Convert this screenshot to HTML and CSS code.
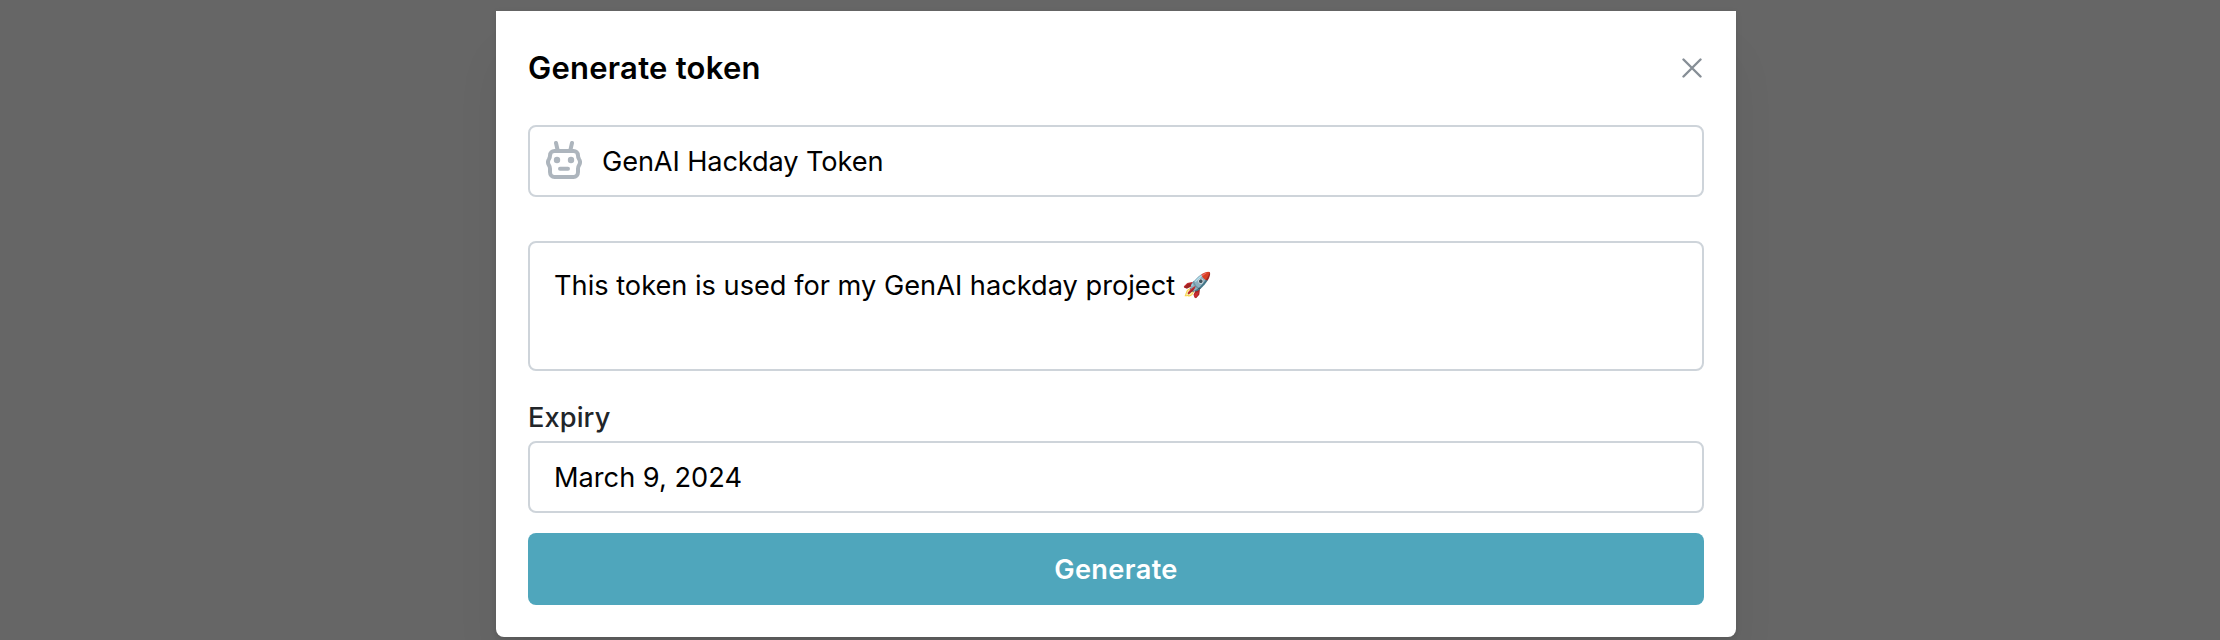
FILE: index.html
```html
<!DOCTYPE html>
<html lang="en">
<head>
<meta charset="utf-8">
<title>Generate token</title>
<link rel="stylesheet" href="styles.css">
</head>
<body>
<main class="overlay">
  <section class="modal" role="dialog" aria-labelledby="title">
    <header class="modal-header">
      <h1 class="title" id="title">Generate token</h1>
      <svg class="close" viewBox="0 0 20 20" role="button" aria-label="Close"><path d="M1.5 1.5l17 17M18.5 1.5l-17 17"/></svg>
    </header>
    <div class="field name-field">
      <svg class="robot" viewBox="0 0 36 38">
        <path class="robot-line" d="M10 2l1.600 7M26 2l-1.600 7M8.500 10h19c2.500 0 4.500 1.900 4.500 4.400 0 1.500.2 2.300 1 3.600 1.300 2 1.300 4.300 0 6.300-.8 1.200-1 2-1 3.400V31c0 3-2 5-4.500 5h-19C6 36 4 34 4 31v-3.300c0-1.400-.2-2.200-1-3.400-1.300-2-1.300-4.300 0-6.300.8-1.300 1-2.100 1-3.600C4 11.900 6 10 8.500 10z"/>
        <path class="robot-line" d="M14 27.700h8"/>
        <circle cx="11" cy="19" r="3.200"/><circle cx="25" cy="19" r="3.200"/>
      </svg>
      <span class="value name-value">GenAI Hackday Token</span>
    </div>
    <div class="field description-field"><span class="value">This token is used for my GenAI hackday project</span><span class="emoji">🚀</span></div>
    <div class="label">Expiry</div>
    <div class="field date-field"><span class="value date-value">March 9, 2024</span></div>
    <button class="submit"><span>Generate</span></button>
  </section>
</main>
</body>
</html>
```
FILE: styles.css
```css
* { box-sizing: border-box; }
body { margin: 0; font-family: Inter, "Liberation Sans", sans-serif; color: #000; }
.overlay { height: 640px; overflow: hidden; display: flex; justify-content: center; padding-top: 11px; background: #666; }
.modal { width: 1240px; height: 626px; margin-left: 12px; padding: 32px; display: flex; flex-direction: column; background: #fff; border-radius: 0 0 8px 8px; box-shadow: 0 2px 6px rgba(0,0,0,.1), 0 40px 50px -10px rgba(0,0,0,.08); }
.modal-header { height: 50px; margin-bottom: 32px; display: flex; align-items: center; justify-content: space-between; }
.title { margin: 0; font-size: 31px; line-height: 50px; font-weight: 600; letter-spacing: .25px; }
.close { width: 20px; height: 20px; margin-right: 2px; fill: none; stroke: #868e96; stroke-width: 2.4; stroke-linecap: round; }
.field { display: flex; align-items: center; height: 72px; border: 2px solid #ced4da; border-radius: 8px; white-space: nowrap; }
.name-field { padding-left: 16px; }
.robot { width: 36px; height: 38px; margin: 0 20px 2px 0; fill: #adb5bd; }
.robot-line { fill: none; stroke: #adb5bd; stroke-width: 4; stroke-linecap: round; stroke-linejoin: round; }
.value { font-size: 27.2px; line-height: 44px; }
.name-value { padding-top: 2px; letter-spacing: -.12px; }
.description-field { height: 130px; margin-top: 44px; padding: 21px 24px; align-items: flex-start; }
.emoji { margin-left: 7px; font-size: 24px; line-height: 42px; }
.label { height: 44px; margin: 25px 0 1px; font-size: 27.2px; line-height: 44px; font-weight: 500; letter-spacing: .1px; color: #212529; }
.date-field { padding-left: 24px; }
.date-value { padding-top: 2px; }
.submit { height: 72px; margin-top: 20px; padding: 2px 0 0; border: 0; border-radius: 8px; background: #4fa6bc; color: #fff; font: 600 27.2px/44px Inter, "Liberation Sans", sans-serif; letter-spacing: .35px; }
```
